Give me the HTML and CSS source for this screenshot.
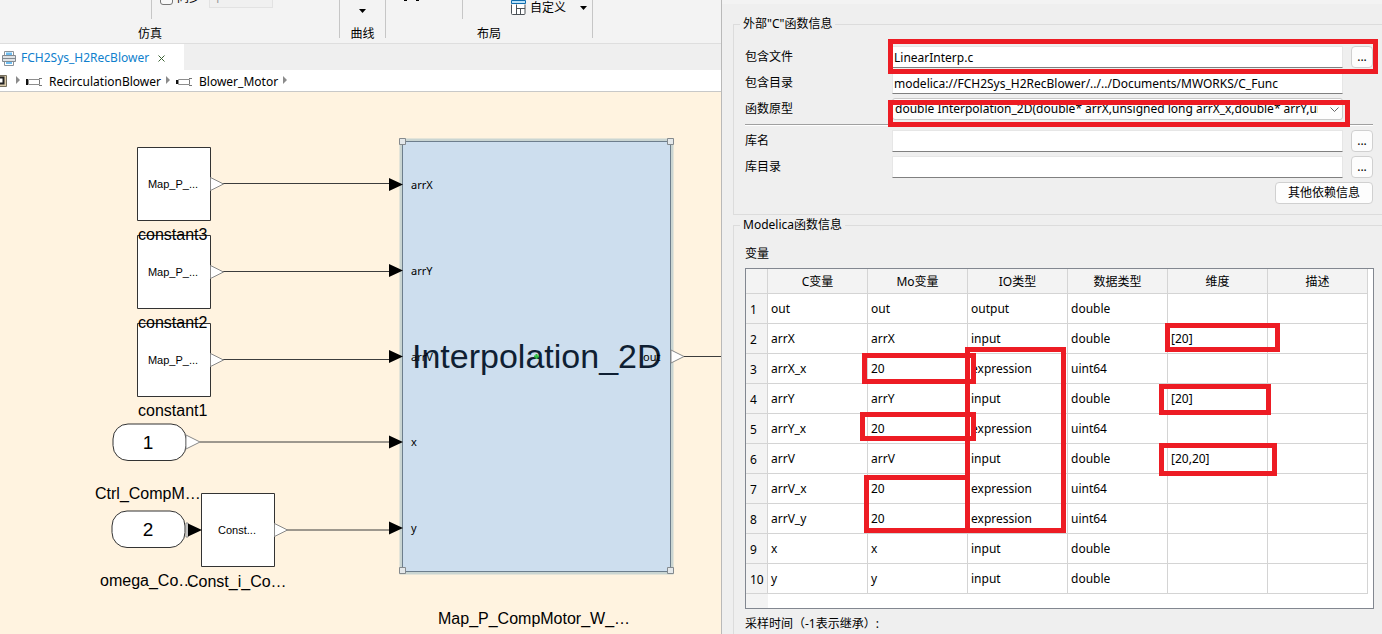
FILE: index.html
```html
<!DOCTYPE html>
<html lang="zh-CN">
<head>
<meta charset="utf-8">
<title>FCH2Sys_H2RecBlower</title>
<link rel="stylesheet" href="styles.css">
</head>
<body>
<div class="app">
  <main class="workspace">
    <div class="ribbon">
      <section class="ribbon-group group-sim">
        <div class="tools">
          <span class="rule"></span>
          <label class="check"><input type="checkbox">同步</label>
          <input class="step" type="text" value="1" aria-label="步长" disabled>
        </div>
        <div class="group-name">仿真</div>
      </section>
      <section class="ribbon-group group-curve">
        <div class="tools">
          <button class="tool" aria-label="曲线"><svg width="7" height="4"><path d="M0 0h7L3.500 4z"/></svg></button>
        </div>
        <div class="group-name">曲线</div>
      </section>
      <section class="ribbon-group group-layout">
        <div class="tools">
          <svg class="stub" width="17" height="22"><path d="M1 3h3v1H1zM13 3h3v1h-3z"/></svg>
          <span class="rule"></span>
          <button class="tool">
            <svg width="15" height="17" fill="none"><path d="M.5 4.500V13.500q0 1 1 1H13q1 0 1-1V4.500" fill="#fff" stroke="#4c5257"/><path d="M5.500 4.500v10M5.500 8.500h8.500M9.500 8.500v6" stroke="#4c5257"/><path d="M.5.5h14v3H.5z" fill="#b9e2fa" stroke="#0f6cad"/></svg>
            <span>自定义</span>
            <svg class="caret" width="7" height="4"><path d="M0 0h7L3.500 4z"/></svg>
          </button>
        </div>
        <div class="group-name">布局</div>
      </section>
    </div>

    <div class="tabs">
      <div class="tab">
        <svg width="14" height="15" fill="none"><path d="M2.500 5V.5h9V5M2.500 10v4.500h9V10" stroke="#8a9299" fill="#fff"/><path d="M4 1.500h6V5H4zM4 10h6v3H4z" fill="#6fbdf0"/><path d="M.5 4.500h13v6H.5z" fill="#dfe3e6" stroke="#828a91"/><path d="M1 7.500h12" stroke="#828a91"/></svg>
        <span>FCH2Sys_H2RecBlower</span>
        <button class="close" aria-label="关闭"><svg width="7" height="7"><path d="M.5.5l6 6M6.500.5l-6 6" stroke="#3c6234"/></svg></button>
      </div>
    </div>

    <nav class="crumbs">
      <svg width="7" height="12" fill="none"><path d="M-5 .5H6.500v11H-5z" fill="#d8c9a8" stroke="#77705f"/><path d="M-3 2.500H3.500v6H-3z" fill="#fff" stroke="#222" stroke-width="2"/></svg>
      <svg class="chev" width="4" height="8"><path d="M0 0l4 4-4 4z"/></svg>
      <a href="#recirculation"><svg width="16" height="8"><path d="M0 1h2v6H0z" fill="#111"/><path d="M2.500 1.500h11v5h-11z" fill="#fff" stroke="#8d8d8d"/><path d="M13 .5h3M13 7.500h3M13.500 2v4" stroke="#777"/></svg>RecirculationBlower</a>
      <svg class="chev" width="4" height="8"><path d="M0 0l4 4-4 4z"/></svg>
      <a href="#motor"><svg width="16" height="8"><path d="M0 2h2v4H0z" fill="#111"/><path d="M2.500 1.500h11v5h-11z" fill="#fff" stroke="#8d8d8d"/><path d="M13 .5h3M13 7.500h3M13.500 2v4" stroke="#777"/></svg>Blower_Motor</a>
      <svg class="chev" width="4" height="8"><path d="M0 0l4 4-4 4z"/></svg>
    </nav>

    <div class="canvas">
      <svg class="diagram" width="721" height="542" viewBox="0 92 721 542">
        <g class="wire">
          <path d="M223 183.500H390M223 271.500H390M223 359.500H390M200 442H390M287 530H390M683 356.500H721"/>
        </g>
        <g class="block">
          <path d="M137.500 147.500h73v73h-73zM137.500 235.500h73v73h-73zM137.500 323.500h73v73h-73zM201.500 493.500h73v73h-73z"/>
          <rect x="113" y="424" width="73" height="36.500" rx="15"/>
          <rect x="112" y="511" width="73" height="36.500" rx="15"/>
        </g>
        <g class="outlet">
          <path d="M210.500 177.500l13 6.500-13 6.500zM210.500 265.500l13 6.500-13 6.500zM210.500 353.500l13 6.500-13 6.500zM186 435l14 7-14 7zM274.500 523.500l13 6.500-13 6.500zM186 523h2v14h-2z"/>
        </g>
        <g class="title">
          <text x="138" y="240">constant3</text>
          <text x="138" y="328">constant2</text>
          <text x="138" y="416">constant1</text>
          <text x="95" y="499">Ctrl_CompM…</text>
          <text x="100" y="586">omega_Co…</text>
          <text x="187" y="587">Const_i_Co…</text>
          <text x="438" y="624">Map_P_CompMotor_W_…</text>
        </g>
        <g class="value">
          <text x="173" y="188">Map_P_...</text>
          <text x="173" y="276">Map_P_...</text>
          <text x="173" y="364">Map_P_...</text>
          <text x="237" y="534">Const...</text>
        </g>
        <g class="index">
          <text x="148" y="449">1</text>
          <text x="148" y="536">2</text>
        </g>
        <rect class="halo" x="402.500" y="141.500" width="268" height="430"/>
        <rect class="selected" x="402.500" y="141.500" width="268" height="430"/>
        <path class="outlet" d="M671 350l13 6.500-13 6.500z"/>
        <path class="inlet" d="M389 178l14 6.500-14 6.500zM389 264l14 6.500-14 6.500zM389 350l14 6.500-14 6.500zM389 435.500l14 6.500-14 6.500zM389 521.500l14 6.500-14 6.500zM188 523.500l14 6.500-14 6.500z"/>
        <text class="name" x="412" y="368">Interpolation_2D</text>
        <g class="port">
          <text x="411" y="189">arrX</text>
          <text x="411" y="275">arrY</text>
          <text x="411" y="361">arrV</text>
          <text x="411" y="446">x</text>
          <text x="411" y="532">y</text>
          <text x="643" y="361">out</text>
        </g>
        <path class="center" d="M534 356.500h5M536.500 354v5"/>
        <path class="handle" d="M399.500 138.500h6v6h-6zM667.500 138.500h6v6h-6zM399.500 567.500h6v6h-6zM667.500 567.500h6v6h-6z"/>
      </svg>
    </div>
  </main>

  <aside class="panel">
    <fieldset class="group">
      <legend>外部"C"函数信息</legend>
      <div class="fields">
        <label for="file">包含文件</label>
        <input id="file" type="text" value="LinearInterp.c">
        <button class="btn" aria-label="浏览包含文件">...</button>

        <label for="dir">包含目录</label>
        <input id="dir" type="text" value="modelica://FCH2Sys_H2RecBlower/../../Documents/MWORKS/C_Func">
        <span></span>

        <label for="proto">函数原型</label>
        <div class="combo">
          <select id="proto"><option>double Interpolation_2D(double* arrX,unsigned long arrX_x,double* arrY,unsigned long arrY_x)</option></select>
          <svg width="9" height="5" fill="none"><path d="M.5.5l4 4 4-4" stroke="#666"/></svg>
        </div>
        <span></span>

        <hr>

        <label for="lib">库名</label>
        <input id="lib" type="text">
        <button class="btn" aria-label="浏览库名">...</button>

        <label for="libdir">库目录</label>
        <input id="libdir" type="text">
        <button class="btn" aria-label="浏览库目录">...</button>

        <button class="btn wide">其他依赖信息</button>
      </div>
      <span class="mark mark-file"></span>
      <span class="mark mark-proto"></span>
    </fieldset>

    <fieldset class="group group-vars">
      <legend>Modelica函数信息</legend>
      <div class="caption">变量</div>
      <div class="grid">
        <table>
          <colgroup><col class="col-no"><col span="6" class="col-data"></colgroup>
          <thead><tr><th></th><th>C变量</th><th>Mo变量</th><th>IO类型</th><th>数据类型</th><th>维度</th><th>描述</th></tr></thead>
          <tbody>
            <tr><th>1</th><td>out</td><td>out</td><td>output</td><td>double</td><td></td><td></td></tr>
            <tr><th>2</th><td>arrX</td><td>arrX</td><td>input</td><td>double</td><td>[20]</td><td></td></tr>
            <tr><th>3</th><td>arrX_x</td><td>20</td><td>expression</td><td>uint64</td><td></td><td></td></tr>
            <tr><th>4</th><td>arrY</td><td>arrY</td><td>input</td><td>double</td><td>[20]</td><td></td></tr>
            <tr><th>5</th><td>arrY_x</td><td>20</td><td>expression</td><td>uint64</td><td></td><td></td></tr>
            <tr><th>6</th><td>arrV</td><td>arrV</td><td>input</td><td>double</td><td>[20,20]</td><td></td></tr>
            <tr><th>7</th><td>arrV_x</td><td>20</td><td>expression</td><td>uint64</td><td></td><td></td></tr>
            <tr><th>8</th><td>arrV_y</td><td>20</td><td>expression</td><td>uint64</td><td></td><td></td></tr>
            <tr><th>9</th><td>x</td><td>x</td><td>input</td><td>double</td><td></td><td></td></tr>
            <tr><th>10</th><td>y</td><td>y</td><td>input</td><td>double</td><td></td><td></td></tr>
          </tbody>
        </table>
        <div class="grid-foot"></div>
        <span class="mark mark-r3"></span>
        <span class="mark mark-r5"></span>
        <span class="mark mark-r7"></span>
        <span class="mark mark-io"></span>
        <span class="mark mark-d2"></span>
        <span class="mark mark-d4"></span>
        <span class="mark mark-d6"></span>
      </div>
      <div class="caption sample">采样时间（-1表示继承）:</div>
    </fieldset>
  </aside>
</div>
</body>
</html>
```
FILE: styles.css
```css
* { box-sizing: border-box; }

body {
  margin: 0;
  height: 100vh;
  overflow: hidden;
  background: #efefef;
  color: #000;
  font: 12px/16px "Noto Sans", "Noto Sans CJK SC", sans-serif;
}

button, input, select { font: inherit; color: inherit; margin: 0; }
svg { flex: none; }

.app {
  display: grid;
  grid-template-columns: 722fr 660fr;
  height: 100%;
}

.workspace {
  display: flex;
  flex-direction: column;
  min-width: 0;
  overflow: hidden;
  border-right: 1px solid #b9b9b9;
}

/* Ribbon */
.ribbon {
  display: flex;
  align-items: flex-end;
  flex: none;
  height: 44px;
  overflow: hidden;
  background: #f3f3f3;
  border-bottom: 1px solid #dedede;
}
.ribbon-group {
  flex: none;
  height: 60px;
  margin-bottom: 5px;
  border-right: 1px solid #c6c6c6;
}
.group-sim { width: 379px; margin-left: -39px; }
.group-curve { width: 46px; }
.group-layout { width: 207px; }
.tools { display: flex; align-items: flex-end; height: 41px; }
.rule { width: 1px; height: 41px; background: #c6c6c6; }
.group-name { text-align: center; line-height: 30px; }

.group-sim .tools { padding-left: 190px; gap: 8px; }
.check { display: flex; align-items: center; gap: 4px; height: 20px; margin-bottom: 11px; }
.check input {
  appearance: none;
  width: 13px;
  height: 13px;
  border: 1px solid #777;
  border-radius: 3px;
  background: #f8f8f8;
}
.step {
  width: 64px;
  height: 20px;
  margin-bottom: 11px;
  padding: 0 4px;
  border: 1px solid #e2e2e2;
  background: #f0f0f0;
  color: #9a9a9a;
}
.tool {
  display: flex;
  align-items: center;
  gap: 4px;
  height: 22px;
  padding: 0;
  border: 0;
  background: none;
}
.group-curve .tools { justify-content: center; align-items: flex-end; }
.group-curve .tool { height: 16px; }
.caret { margin-left: 10px; }
.stub { margin: 0 42px 0 17px; }
.group-layout .tool { margin-left: 48px; }

/* Document tabs and path */
.tabs { display: flex; flex: none; height: 26px; background: #efefef; }
.tab {
  display: flex;
  align-items: center;
  gap: 5px;
  width: 184px;
  padding: 2px 2px 0;
  background: #fff;
  color: #107fcd;
}
.close { display: flex; margin-left: 4px; padding: 0; border: 0; background: none; }

.crumbs {
  display: flex;
  align-items: center;
  flex: none;
  gap: 5px;
  height: 22px;
  background: #fff;
  border-bottom: 1px solid #c8c8c8;
}
.crumbs a { display: flex; align-items: center; gap: 4px; padding-top: 2px; color: #000; text-decoration: none; }
.crumbs a svg { width: 16px; }
.chev { fill: #8b8b8b; }
.crumbs svg:first-child { margin-right: 4px; }
.crumbs a { gap: 3px; margin-left: 1px; }
.crumbs svg + a { margin-left: 1px; }
.crumbs .chev { margin-bottom: 2px; }

/* Diagram */
.canvas { flex: 1; min-height: 0; overflow: hidden; background: #fff3e0; }
.diagram { display: block; font-family: "Liberation Sans", Arial, sans-serif; }
.wire { fill: none; stroke: #3c3c3c; }
.block { fill: #fff; stroke: #333; }
.outlet { fill: #fff; stroke: #888; }
.inlet { fill: #000; }
.title { font-size: 16px; }
.value { font-size: 11px; text-anchor: middle; }
.index { font-size: 19px; text-anchor: middle; }
.halo { fill: none; stroke: #cad5d2; stroke-width: 6; }
.selected { fill: #cddeee; stroke: #6d7e8c; }
.name { font-size: 34px; fill: #0f1f33; }
.port { font-family: "Noto Sans", sans-serif; font-size: 11px; }
.center { stroke: #2fbf3f; stroke-width: 2; }
.handle { fill: #e4e8ea; stroke: #858a8e; }

/* Function panel */
.panel {
  min-width: 0;
  overflow: hidden;
  padding: 14px 0 0 11px;
  background: linear-gradient(#f3f3f3 4px, #efefef 4px);
}
.group {
  position: relative;
  min-width: 0;
  margin: 0;
  padding: 12px 9px 10px 11px;
  border: 1px solid #dcdcdc;
  border-right: 0;
}
legend { margin-left: -5px; padding: 0 3px; line-height: 20px; }

.fields {
  display: grid;
  grid-template-columns: 139px minmax(0, 1fr) 22px;
  gap: 4px 8px;
  align-items: center;
}
.fields input {
  width: 100%;
  height: 22px;
  padding: 0 1px;
  border: 1px solid #e6e6e6;
  border-bottom-color: #808080;
  background: #fff;
}
.combo { position: relative; height: 22px; }
.combo select {
  appearance: none;
  width: 100%;
  height: 22px;
  padding: 0 24px 0 2px;
  border: 1px solid #c9c9c9;
  border-radius: 3px;
  background: #fdfdfd;
}
.combo svg { position: absolute; right: 4px; top: 9px; }
.fields hr {
  grid-column: 1 / -1;
  width: 100%;
  height: 2px;
  margin: 0;
  border: 0;
  border-top: 1px solid #a0a0a0;
  background: #fff;
}
.btn {
  height: 22px;
  padding: 0;
  border: 1px solid #d0d0d0;
  border-radius: 4px;
  background: #fdfdfd;
}
.wide { grid-column: 2 / -1; justify-self: end; width: 98px; }

.group-vars { padding: 9px 8px 10px 11px; }
.caption { line-height: 20px; }
.grid {
  position: relative;
  height: 341px;
  margin-top: 4px;
  border: 1px solid #828790;
  background: #fff;
}
.grid table { border-collapse: separate; border-spacing: 0; table-layout: fixed; width: 622px; }
.col-no { width: 22px; }
.col-data { width: 100px; }
.grid th, .grid td {
  height: 30px;
  padding: 0 3px;
  border-right: 1px solid #d4d4d4;
  border-bottom: 1px solid #d4d4d4;
  text-align: left;
  font-weight: 400;
}
.grid th { background: #f3f3f3; }
.grid thead th { height: 25px; padding-top: 2px; text-align: center; }
.grid tbody th { padding: 2px 0 0 4px; white-space: nowrap; }
.grid-foot { width: 22px; height: 14px; background: #f3f3f3; }
.sample { padding-top: 5px; }

/* Callout frames laid over the form and the table */
.mark { position: absolute; border: 5px solid #ed1c24; pointer-events: none; }
.mark-file { left: 154px; right: 4px; top: 5px; height: 35px; }
.mark-proto { left: 154px; right: 32px; top: 66px; height: 27px; }
.mark-r3 { left: 116px; top: 84px; width: 114px; height: 31px; }
.mark-r5 { left: 114px; top: 143px; width: 116px; height: 29px; }
.mark-r7 { left: 118px; top: 206px; width: 106px; height: 58px; }
.mark-io { left: 219px; top: 78px; width: 101px; height: 186px; }
.mark-d2 { left: 419px; top: 54px; width: 115px; height: 29px; }
.mark-d4 { left: 413px; top: 115px; width: 112px; height: 31px; }
.mark-d6 { left: 413px; top: 174px; width: 118px; height: 33px; }
```
